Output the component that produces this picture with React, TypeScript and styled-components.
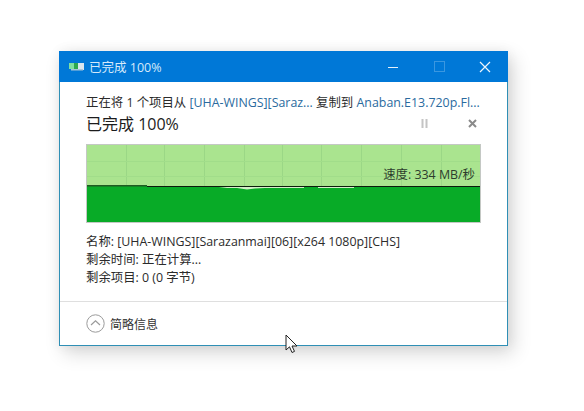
import React from "react";
import styled, { createGlobalStyle } from "styled-components";

const Global = createGlobalStyle`
  html, body { margin: 0; padding: 0; background: #fff; }
  body { width: 584px; height: 411px; overflow: hidden; font-family: "Noto Sans CJK SC", "Open Sans", sans-serif; }
`;

const latin = `"Open Sans", "Noto Sans CJK SC", sans-serif`;

const Desktop = styled.div`
  position: relative;
  width: 584px;
  height: 411px;
  padding: 51px 0 0 59px;
  box-sizing: border-box;
`;

const Window = styled.div`
  width: 449px;
  height: 295px;
  box-sizing: border-box;
  border: 1px solid #2f8fb5;
  border-top: none;
  background: #fff;
  box-shadow: 5px 7px 18px rgba(0, 0, 0, 0.16), 0 0 12px rgba(0, 0, 0, 0.06);
  display: flex;
  flex-direction: column;
`;

const TitleBar = styled.div`
  height: 31px;
  margin: 0 -1px;
  background: #0078d7;
  display: flex;
  align-items: center;
  padding-left: 10px;
  color: #d5e9fa;
  font-size: 12.5px;
  font-family: ${latin};
`;

const TitleText = styled.span`
  margin-left: 4px;
  flex: 1;
`;

const WinButton = styled.div`
  width: 46px;
  height: 31px;
  display: flex;
  align-items: center;
  justify-content: center;
`;

const Body = styled.div`
  flex: 1;
  padding: 12px 26px 0 26px;
  font-family: ${latin};
`;

const Line = styled.div`
  height: 18px;
  line-height: 18px;
  font-size: 12.4px;
  color: #2b2b2b;
  white-space: nowrap;
`;

const SourceLink = styled.span`
  color: #2a6a9e;
`;

const Status = styled.div`
  height: 24px;
  margin-top: -1px;
  display: flex;
  align-items: center;
  font-size: 16px;
  color: #1c1c1c;
`;

const StatusText = styled.span`
  flex: 1;
`;

const StatusButton = styled.div<{ $w: number }>`
  width: ${({ $w }) => $w}px;
  display: flex;
  justify-content: center;
`;

const Chart = styled.div`
  position: relative;
  width: 395px;
  height: 79px;
  margin-top: 9px;
  border: 1px solid #c4c8c4;
  box-sizing: border-box;
`;

const ChartSvg = styled.svg`
  display: block;
`;

const Speed = styled.span`
  position: absolute;
  right: 5px;
  top: 22px;
  font-size: 12.4px;
  line-height: 16px;
  color: #2d3d2d;
`;

const Details = styled.div`
  margin-top: 10px;
`;

const Divider = styled.div`
  height: 1px;
  background: #dfdfdf;
`;

const Footer = styled.div`
  height: 43px;
  padding-left: 26px;
  display: flex;
  align-items: center;
  gap: 5px;
  font-size: 12px;
  color: #333;
  font-family: ${latin};
`;

const Cursor = styled.svg`
  position: absolute;
  left: 285px;
  top: 334px;
`;

const dips = [
  "M121 42 H132 L140 43 L150 43 L160 44.5 L168 43.5 L178 43 H217 V42 Z",
  "M231 42 H267 V43 H231 Z",
];

const App = () => (
  <Desktop>
    <Global />
    <Window>
      <TitleBar>
        <svg width="16" height="10" viewBox="0 0 16 10">
          <rect x="0" y="1" width="5" height="6" fill="#7fe0a0" />
          <rect x="5" y="1" width="4" height="6" fill="#2ca84e" />
          <rect x="9" y="1" width="6" height="7" fill="#d8e6ef" />
          <rect x="2" y="7" width="12" height="1.5" fill="#a8c4d8" />
        </svg>
        <TitleText>已完成 100%</TitleText>
        <WinButton>
          <svg width="10" height="10"><rect x="0" y="5" width="10" height="1" fill="#e4f1fb" /></svg>
        </WinButton>
        <WinButton>
          <svg width="11" height="11"><rect x="0.5" y="0.5" width="10" height="10" fill="none" stroke="#3a97e0" /></svg>
        </WinButton>
        <WinButton>
          <svg width="12" height="12"><path d="M1 1 L11 11 M11 1 L1 11" stroke="#eef6fc" strokeWidth="1.2" /></svg>
        </WinButton>
      </TitleBar>
      <Body>
        <Line>
          正在将 1 个项目从 <SourceLink>[UHA-WINGS][Saraz...</SourceLink> 复制到 <SourceLink>Anaban.E13.720p.Fl...</SourceLink>
        </Line>
        <Status>
          <StatusText>已完成 100%</StatusText>
          <StatusButton $w={76}>
            <svg width="8" height="9"><path d="M1.5 0 V9 M5.5 0 V9" stroke="#c4c4c4" strokeWidth="2" /></svg>
          </StatusButton>
          <StatusButton $w={18}>
            <svg width="9" height="9"><path d="M1 1 L8 8 M8 1 L1 8" stroke="#8a8a8a" strokeWidth="2" /></svg>
          </StatusButton>
        </Status>
        <Chart>
          <ChartSvg width="393" height="77" viewBox="0 0 393 77">
            <rect width="393" height="77" fill="#aae48f" />
            {[39, 77, 117, 157, 195, 234, 274, 314, 354].map((x) => (
              <rect key={x} x={x} y="0" width="1" height="41" fill="#9bd786" />
            ))}
            {[16, 31].map((y) => (
              <rect key={y} x="0" y={y} width="393" height="1" fill="#a1dd8a" />
            ))}
            <rect y="41" width="393" height="36" fill="#08ab27" />
            {dips.map((d) => (
              <path key={d} d={d} fill="#d4f0c8" />
            ))}
            <rect y="40" width="60" height="1.5" fill="#1f5c22" />
            <rect x="60" y="41" width="333" height="1" fill="#0c1c0c" />
          </ChartSvg>
          <Speed>速度: 334 MB/秒</Speed>
        </Chart>
        <Details>
          <Line>名称: [UHA-WINGS][Sarazanmai][06][x264 1080p][CHS]</Line>
          <Line>剩余时间: 正在计算...</Line>
          <Line>剩余项目: 0 (0 字节)</Line>
        </Details>
      </Body>
      <Divider />
      <Footer>
        <svg width="19" height="19" viewBox="0 0 19 19">
          <circle cx="9.5" cy="9.5" r="8.7" fill="#fff" stroke="#9a9a9a" />
          <path d="M5 11 L9.5 6.8 L14 11" fill="none" stroke="#9a9a9a" strokeWidth="1.2" />
        </svg>
        简略信息
      </Footer>
    </Window>
    <Cursor width="14" height="20" viewBox="0 0 14 20">
      <path d="M1 1 V16 L4.5 12.8 L7 18.5 L9.5 17.4 L7 12 H12 Z" fill="#fff" stroke="#222" strokeWidth="1" strokeLinejoin="round" />
    </Cursor>
  </Desktop>
);

export default App;
